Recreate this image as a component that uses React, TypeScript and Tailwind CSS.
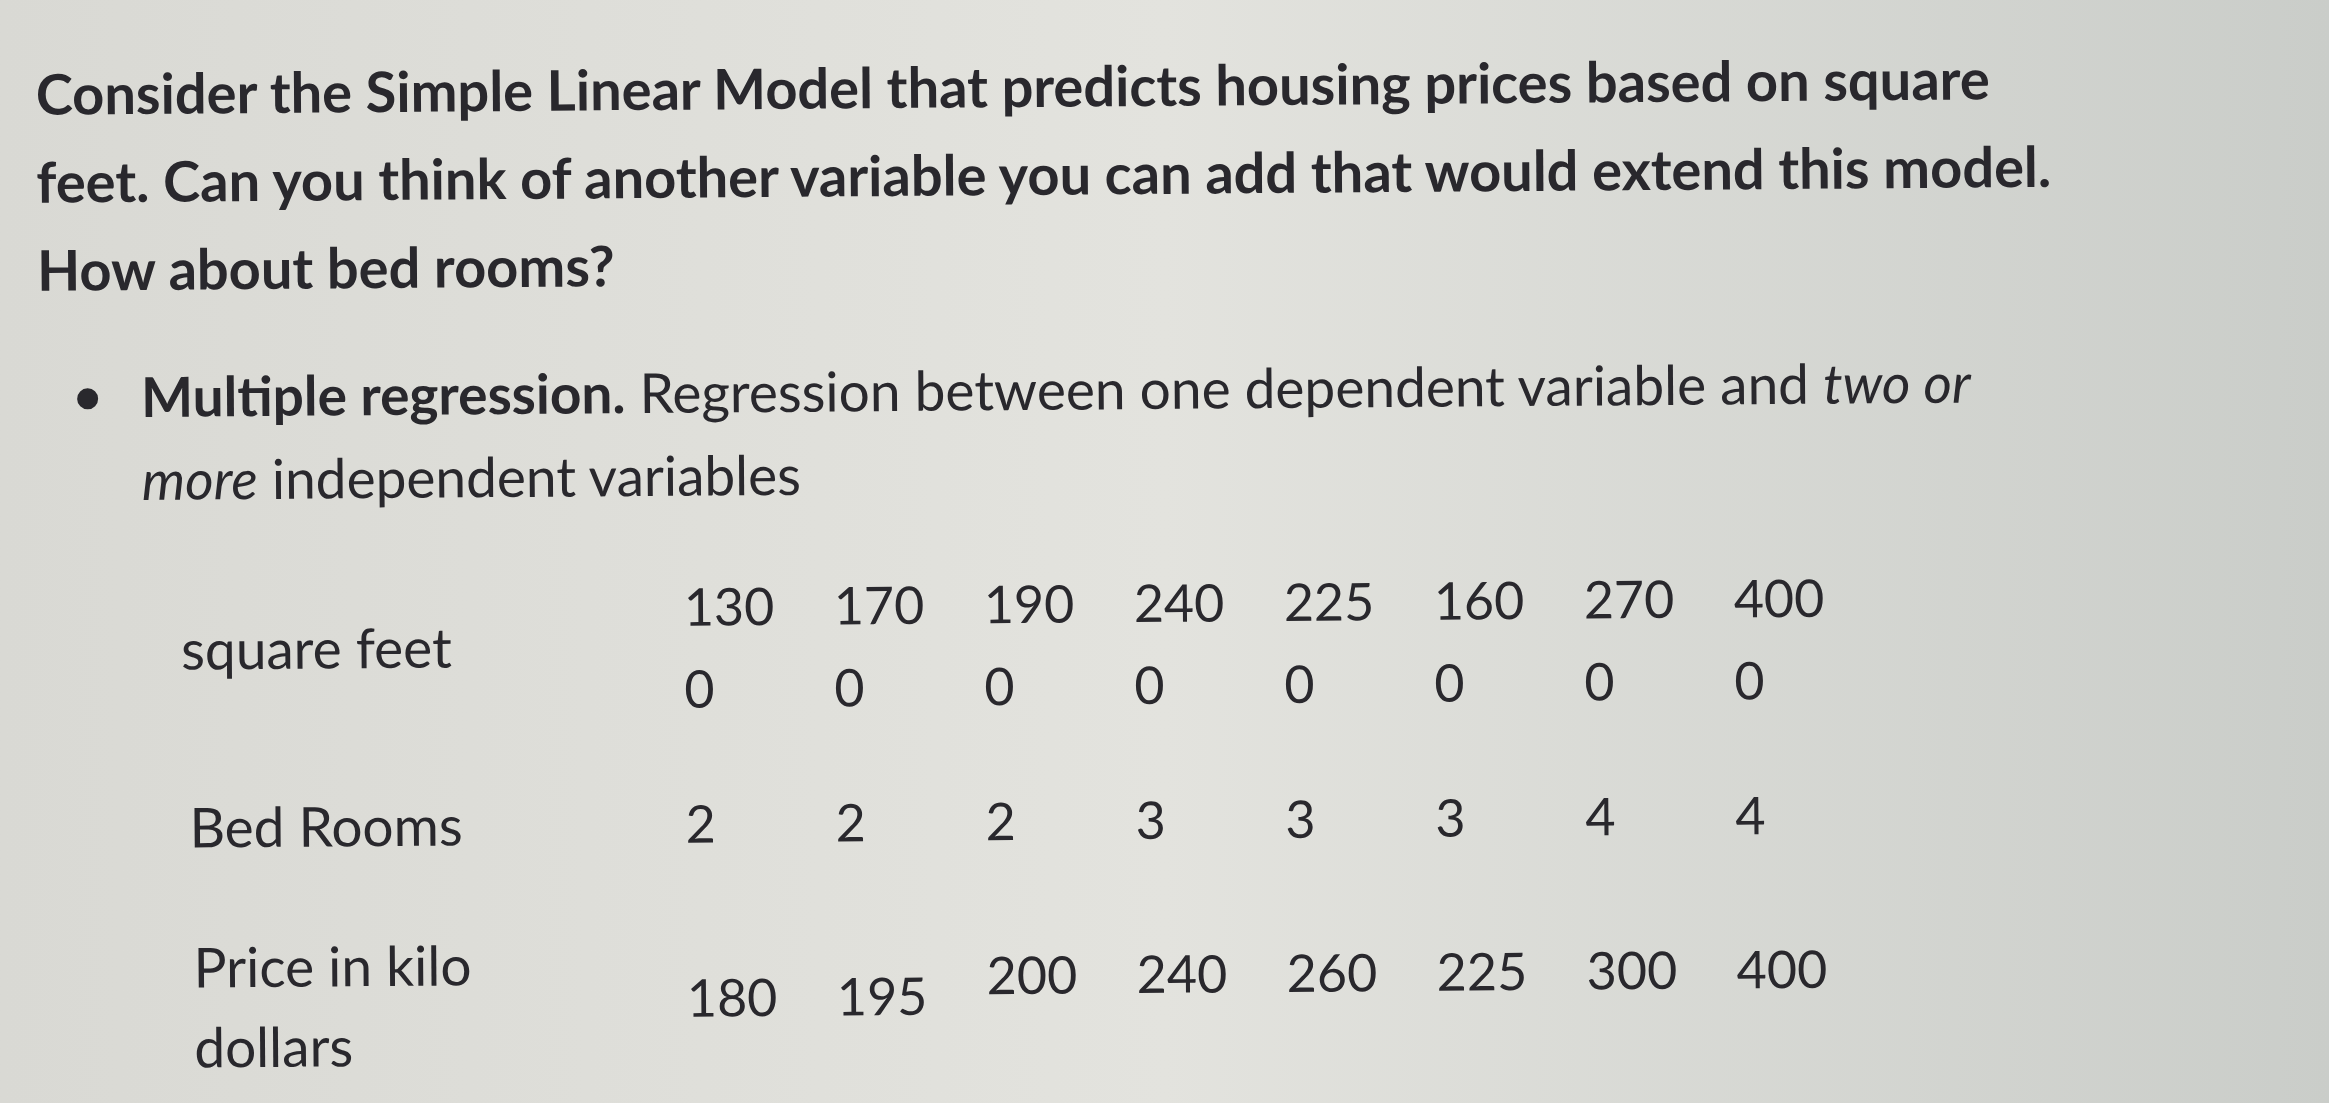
const sqft = ["1300", "1700", "1900", "2400", "2250", "1600", "2700", "4000"];
const beds = ["2", "2", "2", "3", "3", "3", "4", "4"];
const prices = ["180", "195", "200", "240", "260", "225", "300", "400"];

export default function App() {
  return (
    <div className="h-[1103px] w-full overflow-hidden bg-linear-to-r from-[#d9d9d4] via-[#e3e3de] to-[#cacdc9] text-[#29282d] [font-family:Lato,'Open_Sans',sans-serif]">
      <div className="origin-top-left -rotate-[0.45deg]">
        {/* question */}
        <p className="pt-[50px] pl-[35px] text-[56px] leading-[88px] font-bold">
          Consider the Simple Linear Model that predicts housing prices based on square
          <br />
          feet. Can you think of another variable you can add that would extend this model.
          <br />
          How about bed rooms?
        </p>

        {/* definition */}
        <div className="mt-[42px] flex items-start pl-[74px] text-[55px] leading-[83px]">
          <span className="mt-[33px] h-[21px] w-[21px] shrink-0 rounded-full bg-[#29282d]" />
          <p className="pl-[43px]">
            <b className="font-bold">Multiple regression.</b> Regression between one dependent variable and <i>two or</i>
            <br />
            <i>more</i> independent variables
          </p>
        </div>

        {/* data table */}
        <div className="mt-[48px] pl-[176px]">
          <div className="flex">
            <div className="mt-[39px] w-[503px] text-[55px] leading-[82px]">square feet</div>
            {sqft.map((v, i) => (
              <div key={i} className="w-[150px] text-[52px] leading-[82px]">
                <span className="block w-[110px] break-all">{v}</span>
              </div>
            ))}
          </div>

          <div className="mt-[53px] flex">
            <div className="w-[503px] pl-[7px] text-[55px] leading-[82px]">Bed Rooms</div>
            {beds.map((v, i) => (
              <div key={i} className="w-[150px] text-[52px] leading-[82px]">{v}</div>
            ))}
          </div>

          <div className="mt-[55px] flex">
            <div className="mt-[4px] w-[503px] pl-[10px] text-[55px] leading-[80px]">
              Price in kilo
              <br />
              dollars
            </div>
            {prices.map((v, i) => (
              <div key={i} className={"w-[150px] text-[52px] leading-[82px] " + (i < 2 ? "mt-[37px]" : "mt-[17px]")}>
                {v}
              </div>
            ))}
          </div>
        </div>
      </div>
    </div>
  );
}
